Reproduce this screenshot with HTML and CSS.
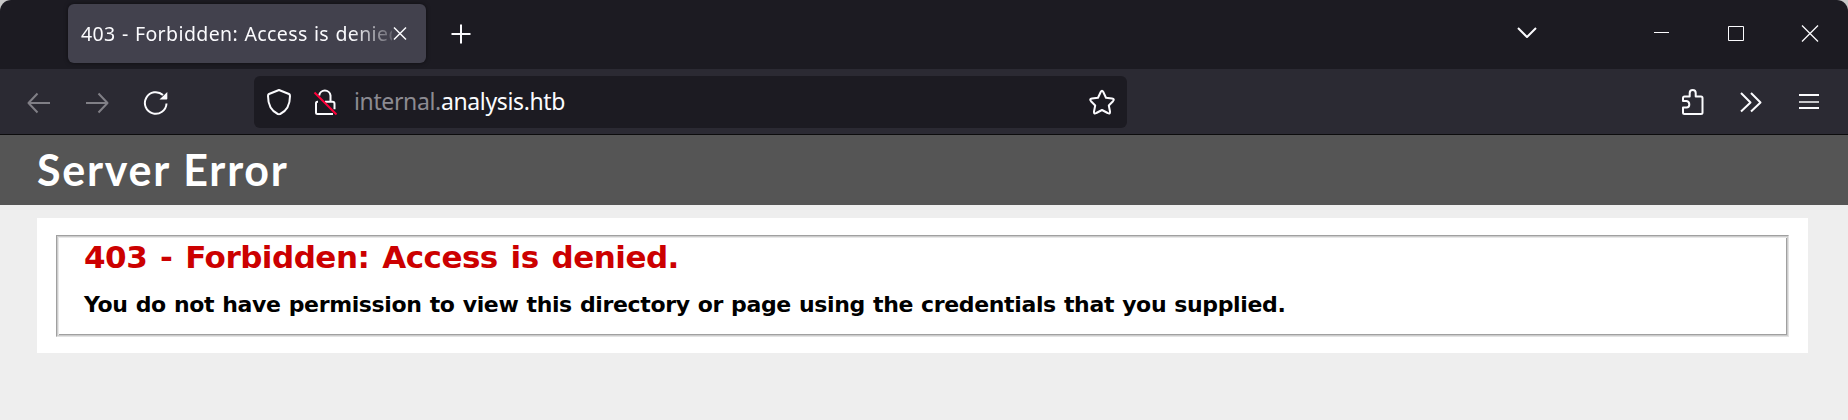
FILE: index.html
```html
<!DOCTYPE html>
<html lang="en">
<head>
<meta charset="utf-8">
<title>403 - Forbidden: Access is denied.</title>
<link rel="stylesheet" href="styles.css">
</head>
<body>
<div class="window">
  <div class="titlebar">
    <div class="tab">
      <span class="tab-title">403 - Forbidden: Access is denied.</span>
      <svg class="icon tab-close" width="16" height="16" viewBox="0 0 16 16"><path d="M2 1.500l12 12M14 1.500l-12 12" stroke-width="1.500"/></svg>
    </div>
    <svg class="icon new-tab" width="20" height="20" viewBox="0 0 20 20"><path d="M.5 10h19M10 .5v19" stroke-width="2"/></svg>
    <div class="window-controls">
      <svg class="icon" width="20" height="20" viewBox="0 0 20 20"><path d="M1 8l9 9 9-9" stroke-width="2"/></svg>
      <svg class="icon minimize" width="15" height="20" viewBox="0 0 15 20"><path d="M0 8.500h15" stroke-width="1"/></svg>
      <svg class="icon maximize" width="16" height="20" viewBox="0 0 16 20"><path d="M.5 2.500h15v14h-15z" stroke-width="1"/></svg>
      <svg class="icon close" width="18" height="20" viewBox="0 0 18 20"><path d="M1 1.500l16 16M17 1.500l-16 16" stroke-width="1.300"/></svg>
    </div>
  </div>
  <div class="toolbar">
    <svg class="icon dim" width="24" height="28" viewBox="0 0 24 28"><path d="M23 15H1.500M10.500 5.500L1.500 15l9 9.500" stroke-width="2"/></svg>
    <svg class="icon dim forward" width="24" height="28" viewBox="0 0 24 28"><path d="M1 15h21.500M13.500 5.500l9 9.500-9 9.500" stroke-width="2"/></svg>
    <svg class="icon reload" width="26" height="28" viewBox="0 0 26 28"><path d="M23.500 15.500A10.800 10.800 0 1 1 20 7" stroke-width="2"/><path class="solid" d="M16.500 11.500h7c.5 0 .8-.3.800-.8V4z"/></svg>
    <div class="urlbar">
      <svg class="icon" width="26" height="28" viewBox="0 0 26 28"><path d="M13 2L3 6Q2 6.500 2 8C2 17 5.500 23 11.800 26Q13 26.700 14.200 26C20.500 23 24 17 24 8Q24 6.500 23 6Z" stroke-width="2"/></svg>
      <svg class="icon lock" width="26" height="28" viewBox="0 0 26 28"><path d="M6.200 7.500A5.700 5.700 0 0 1 17.500 7.500V13M5 13.700H4.500q-1.500 0-1.500 1.500V24.500q0 1.500 1.500 1.500H20M12 13.700H19.500q2 0 2 2v5.500" stroke-width="2"/><path class="slash" d="M1.500 4.500l22 22" stroke-width="2"/></svg>
      <span class="url"><span class="subdomain">internal.</span><span class="domain">analysis.htb</span></span>
      <svg class="icon star" width="28" height="28" viewBox="0 0 28 28"><path d="M12.700 4Q14 1.500 15.300 4L18 9.700L24 10.500Q27 11 25 13.200L20.800 17.500L22 23.500Q22.300 26.500 19.700 25L14 22L8.300 25Q5.700 26.500 6 23.500L7.200 17.500L3 13.200Q1 11 4 10.500L10 9.700Z" stroke-width="2"/></svg>
    </div>
    <div class="tools">
      <svg class="icon" width="24" height="28" viewBox="0 0 24 28"><path d="M2 13V10Q2 8.500 3.500 8.500H8.700V5Q8.700 2 11.700 2T14.700 5V8.500H20Q21.500 8.500 21.500 10V24.500Q21.500 26 20 26H3.500Q2 26 2 24.500V19.500H5.500Q8.300 19.500 8.300 16.500T5.500 13Z" stroke-width="2"/></svg>
      <svg class="icon overflow" width="22" height="28" viewBox="0 0 22 28"><path d="M1 5l9.500 9.500L1 23.500M11 5l9.500 9.500L11 23.500" stroke-width="2"/></svg>
      <svg class="icon menu" width="20" height="28" viewBox="0 0 20 28"><path d="M0 7h20M0 20h20" stroke-width="2"/><path class="mid" d="M0 14h20" stroke-width="2"/></svg>
    </div>
  </div>
  <div class="page">
    <div class="header"><h1>Server Error</h1></div>
    <div class="content">
      <div class="fieldset">
        <h2>403 - Forbidden: Access is denied.</h2>
        <h3>You do not have permission to view this directory or page using the credentials that you supplied.</h3>
      </div>
    </div>
  </div>
</div>
</body>
</html>
```
FILE: styles.css
```css
* { box-sizing: border-box; }
body { margin: 0; background: #c8c8c8; overflow: hidden; }
h1, h2, h3 { margin: 0; white-space: nowrap; }
.window {
  width: 1848px;
  height: 420px;
  display: flex;
  flex-direction: column;
  overflow: hidden;
  border-radius: 11px 11px 0 0;
  background: #eee;
}
.icon {
  display: block;
  flex: none;
  fill: none;
  stroke: #fbfbfe;
  stroke-linecap: butt;
  stroke-linejoin: round;
}
.solid { fill: #fbfbfe; stroke: none; }
.slash { stroke: #ff0039; }
.mid { opacity: .75; }
.dim { stroke: #807f86; }

.titlebar {
  height: 69px;
  padding: 4px 29px 0 68px;
  display: flex;
  background: #1c1b22;
}
.tab {
  width: 358px;
  height: 59px;
  padding: 0 18px 0 13px;
  display: flex;
  align-items: center;
  border-radius: 6px;
  background: #42414d;
  box-shadow: 0 0 4px rgba(0, 0, 0, .5);
}
.tab-title {
  width: 311px;
  flex: none;
  overflow: hidden;
  white-space: nowrap;
  font: 19.500px/30px "Noto Sans", "Open Sans", sans-serif;
  letter-spacing: .4px;
  word-spacing: .8px;
  color: #fbfbfe;
  mask-image: linear-gradient(to right, #000 270px, transparent 320px);
}
.new-tab { margin: 20px 0 0 25px; }
.window-controls {
  display: flex;
  margin: 20px 0 0 auto;
}
.window-controls .icon:first-child { margin-top: -4px; }
.minimize { margin-left: 117px; }
.maximize { margin-left: 59px; }
.close { margin-left: 57px; }

.toolbar {
  height: 66px;
  padding: 1px 29px 0 27px;
  display: flex;
  align-items: center;
  border-bottom: 1px solid #0c0c0d;
  background: #2b2a33;
}
.forward { margin-left: 34px; }
.reload { margin-left: 34px; }
.urlbar {
  width: 873px;
  height: 52px;
  margin-left: 85px;
  padding: 0 11px 0 12px;
  display: flex;
  align-items: center;
  border-radius: 6px;
  background: #1c1b22;
}
.lock { margin-left: 21px; }
.url {
  margin-left: 15px;
  padding-bottom: 2px;
  font: 23px/32px "Noto Sans", "Open Sans", sans-serif;
  letter-spacing: -.36px;
  color: #fbfbfe;
  white-space: nowrap;
}
.subdomain { color: #8c8b92; }
.star { margin-left: auto; }
.tools {
  display: flex;
  margin-left: auto;
}
.overflow { margin-left: 35px; }
.menu { margin-left: 37px; }

.header {
  height: 70px;
  padding-left: 37px;
  background: #555;
}
.header h1 {
  font: 700 43px/70px Lato, sans-serif;
  letter-spacing: 1.750px;
  word-spacing: 1px;
  color: #fff;
}
.content {
  margin: 13px 40px 0 37px;
  height: 135px;
  padding: 17px 19px 16px;
  background: #fff;
}
.fieldset {
  height: 102px;
  padding: 0 0 0 25px;
  border: 1px solid;
  border-color: #a0a0a0 #e3e3e3 #e3e3e3 #a0a0a0;
  box-shadow: inset 1px 1px #ccc, inset -1px -1px #ccc, inset 2px 2px #e8e8e8, inset -2px -2px #a0a0a0;
}
.fieldset h2 {
  margin-left: 2px;
  font: 700 31px/42px "DejaVu Sans", Verdana, sans-serif;
  letter-spacing: -.5px;
  word-spacing: 2.500px;
  color: #c00;
}
.fieldset h3 {
  margin: 11px 0 0 2px;
  font: 700 22px/32px "DejaVu Sans", Verdana, sans-serif;
  letter-spacing: -.36px;
  word-spacing: .8px;
  color: #000;
}
```
